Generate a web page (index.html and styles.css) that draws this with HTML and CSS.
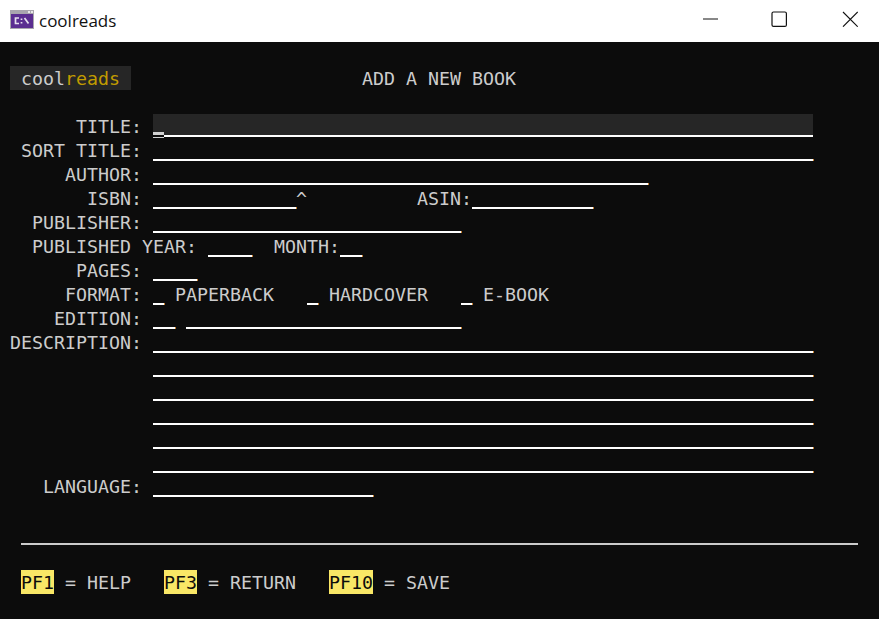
FILE: index.html
```html
<!DOCTYPE html>
<html lang="en">
<head>
<meta charset="utf-8">
<title>coolreads</title>
<link rel="stylesheet" href="styles.css">
</head>
<body>
<header class="titlebar">
  <div class="app">
    <svg class="app-icon" width="24" height="20" viewBox="0 0 24 20">
      <rect x="0" y="0" width="24" height="19" fill="#a9a6ae"/>
      <rect x="1" y="4" width="22" height="14" fill="#5b2e91"/>
      <rect x="18" y="1" width="2" height="2" fill="#e8e8e8"/>
      <rect x="21" y="1" width="2" height="2" fill="#e8e8e8"/>
      <path d="M9 8H5.5V13.5H9M11.5 8.5V10M11.5 12V13.5M14.5 8L18.5 13.5" fill="none" stroke="#e6e0ee" stroke-width="1.7"/>
    </svg>
    <span class="app-name">coolreads</span>
  </div>
  <div class="controls">
    <svg class="control minimize" width="16" height="16" viewBox="0 0 16 16"><path d="M1 8H16" stroke="#111" stroke-width="1" fill="none"/></svg>
    <svg class="control" width="16" height="16" viewBox="0 0 16 16"><rect x="1" y="1" width="14.4" height="14.4" rx="1.5" stroke="#111" stroke-width="1.2" fill="none"/></svg>
    <svg class="control" width="16" height="16" viewBox="0 0 16 16"><path d="M1 1L15.7 15.7M15.7 1L1 15.7" stroke="#111" stroke-width="1.1" fill="none"/></svg>
  </div>
</header>
<main class="terminal">
  <div class="blank"></div>
  <div class="row heading">
    <span class="logo"><span class="cool">cool</span><span class="reads">reads</span></span>
    <span class="screen-title">ADD A NEW BOOK</span>
  </div>
  <div class="blank"></div>
  <div class="row"><span class="label">TITLE:</span><span class="field active w60"><span class="cursor"></span></span></div>
  <div class="row"><span class="label">SORT TITLE:</span><span class="field w60"></span></div>
  <div class="row"><span class="label">AUTHOR:</span><span class="field w45"></span></div>
  <div class="row"><span class="label">ISBN:</span><span class="field w13"></span><span class="caret">^</span><span class="asin">ASIN:</span><span class="field w11"></span></div>
  <div class="row"><span class="label">PUBLISHER:</span><span class="field w28"></span></div>
  <div class="row"><span class="label wide">PUBLISHED YEAR:</span><span class="field w4"></span><span class="month">MONTH:</span><span class="field w2"></span></div>
  <div class="row"><span class="label">PAGES:</span><span class="field w4"></span></div>
  <div class="row"><span class="label">FORMAT:</span><span class="field w1"></span><span class="option">PAPERBACK</span><span class="field w1"></span><span class="option">HARDCOVER</span><span class="field w1"></span><span class="option">E-BOOK</span></div>
  <div class="row"><span class="label">EDITION:</span><span class="field w2"></span><span class="field w25 next"></span></div>
  <div class="row"><span class="label">DESCRIPTION:</span><span class="field w60"></span></div>
  <div class="row"><span class="label"></span><span class="field w60"></span></div>
  <div class="row"><span class="label"></span><span class="field w60"></span></div>
  <div class="row"><span class="label"></span><span class="field w60"></span></div>
  <div class="row"><span class="label"></span><span class="field w60"></span></div>
  <div class="row"><span class="label"></span><span class="field w60"></span></div>
  <div class="row"><span class="label">LANGUAGE:</span><span class="field w20"></span></div>
  <div class="blank"></div>
  <div class="rule-row"><div class="rule"></div></div>
  <div class="blank"></div>
  <div class="row keys">
    <span class="key-item key-help"><span class="key">PF1</span> = HELP</span>
    <span class="key-item key-return"><span class="key">PF3</span> = RETURN</span>
    <span class="key-item"><span class="key key-wide">PF10</span> = SAVE</span>
  </div>
</main>
</body>
</html>
```

FILE: styles.css
```css
* { box-sizing: border-box; }
html, body { margin: 0; height: 100%; }
body { --c: 11px; width: 879px; height: 619px; overflow: hidden; background: #0c0c0c; display: flex; flex-direction: column; }

.titlebar { height: 42px; flex: none; background: #fff; display: flex; justify-content: space-between; align-items: center; }
.app { display: flex; align-items: center; padding-left: 10px; }
.app-icon { display: block; margin-top: -2px; }
.app-name { font: 17px "Open Sans", sans-serif; color: #111; margin-left: 5px; margin-top: -2px; }
.controls { display: flex; gap: 55px; padding-right: 21px; margin-top: -4px; }
.control { display: block; }
.minimize { margin-right: -2px; }

.terminal {
  flex: 1;
  padding-left: 10px;
  color: #cccccc;
  font-family: "DejaVu Sans Mono", monospace;
  font-size: 18.27px;
  line-height: 26px;
}
.blank { height: 24px; }
.row { display: flex; height: 24px; white-space: pre; }

.logo { width: calc(var(--c) * 11); padding-left: var(--c); background: #262626; }
.reads { color: #c19c00; }
.screen-title { margin-left: calc(var(--c) * 21); }

.label { width: calc(var(--c) * 12); margin-right: var(--c); text-align: right; }
.label.wide { width: calc(var(--c) * 17); }

.field { display: block; height: 23px; border-bottom: 2px solid #fff; position: relative; }
.field::after { content: ""; position: absolute; right: -1px; bottom: -2px; width: 1px; height: 2px; background: #c9802e; }
.field.active { background: #262626; }
.field.active::after { display: none; }
.cursor {
  position: absolute; left: 0; bottom: -3px;
  width: var(--c); height: 6px;
  background: linear-gradient(#d0d0d0 0 3px, #0c0c0c 3px 5px, #d0d0d0 5px);
}
.w1 { width: var(--c); }
.w2 { width: calc(var(--c) * 2); }
.w4 { width: calc(var(--c) * 4); }
.w11 { width: calc(var(--c) * 11); }
.w13 { width: calc(var(--c) * 13); }
.w20 { width: calc(var(--c) * 20); }
.w25 { width: calc(var(--c) * 25); }
.w28 { width: calc(var(--c) * 28); }
.w45 { width: calc(var(--c) * 45); }
.w60 { width: calc(var(--c) * 60); }
.next { margin-left: var(--c); }

.caret { width: var(--c); }
.asin { margin-left: calc(var(--c) * 10); width: calc(var(--c) * 5); }
.month { margin-left: calc(var(--c) * 2); width: calc(var(--c) * 6); }
.option { margin-left: var(--c); margin-right: calc(var(--c) * 3); width: calc(var(--c) * 9); }
.option:last-child { margin-right: 0; width: auto; }

.rule-row { height: 24px; padding: 21px 0 0 11px; }
.rule { height: 2px; width: 837px; background: #cccccc; }

.keys { padding-left: var(--c); }
.key-help { width: calc(var(--c) * 13); }
.key-return { width: calc(var(--c) * 15); }
.key { display: inline-block; width: calc(var(--c) * 3); height: 24px; background: #f9e766; color: #0c0c0c; }
.key-wide { width: calc(var(--c) * 4); }
```
